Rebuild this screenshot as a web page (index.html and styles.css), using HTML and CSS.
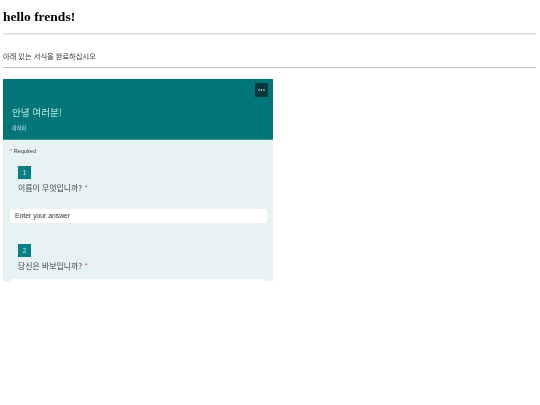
FILE: index.html
```html
<!DOCTYPE html>
<html lang="ko">
<head>
<meta charset="utf-8">
<title>hello frends!</title>
<link rel="stylesheet" href="styles.css">
</head>
<body>
<h1 class="title">hello frends!</h1>
<hr class="rule-top">
<p class="intro">아래 있는 서식을 완료하십시오</p>
<hr class="rule-bottom">
<section class="form">
  <header class="banner">
    <div class="banner-tools"><button class="more" type="button" aria-label="More">
      <svg width="7" height="2" viewBox="0 0 7 2"><circle cx="1" cy="1" r=".75"/><circle cx="3.5" cy="1" r=".75"/><circle cx="6" cy="1" r=".75"/></svg>
    </button></div>
    <h2 class="form-title">안녕 여러분!</h2>
    <p class="form-sub">하하하</p>
  </header>
  <div class="body">
    <p class="required"><span class="star">*</span> Required</p>
    <div class="question">
      <div class="q-head">
        <span class="num">1</span>
        <p class="q-text">이름이 무엇입니까? <span class="star">*</span></p>
      </div>
      <div class="answer">Enter your answer</div>
    </div>
    <div class="question second">
      <div class="q-head">
        <span class="num">2</span>
        <p class="q-text">당신은 바보입니까? <span class="star">*</span></p>
      </div>
      <div class="answer answer-cut"></div>
    </div>
  </div>
</section>
</body>
</html>
```
FILE: styles.css
```css
html, body { margin: 0; padding: 0; background: #fff; }
body { padding: 0 4px 0 3px; font-family: "Liberation Serif", "Noto Sans CJK KR", serif; color: #111; overflow: hidden; }
.title { margin: 0; padding-top: 8px; height: 26px; font-size: 13.5px; line-height: 17px; font-weight: 700; color: #000; box-sizing: border-box; filter: blur(.2px); }
hr { margin: 0; border: 0; display: block; }
.rule-top { height: 1px; margin-top: 7px; background: #dcdcdc; box-shadow: 0 1px 0 #efefef; }
.intro { margin: 0; padding-top: 17px; height: 33px; box-sizing: border-box; font-size: 7.25px; line-height: 10px; font-family: "Noto Sans CJK KR", sans-serif; color: #333; filter: blur(.25px); }
.rule-bottom { height: 1px; background: #c4c4c4; }
.form { width: 270px; height: 202px; margin-top: 11px; overflow: hidden; background: #e7f2f3; font-family: "Liberation Sans", "Noto Sans CJK KR", sans-serif; filter: blur(.25px); }
.banner { height: 61px; background: #03767a; box-sizing: border-box; padding: 4px 5px 0 9px; border-bottom: 1px solid #3f9a9c; }
.banner-tools { display: flex; justify-content: flex-end; height: 14px; }
.more { width: 13px; height: 14px; padding: 0; border: 0; border-radius: 1px; background: #04383b; display: flex; align-items: center; justify-content: center; }
.more svg { fill: #fff; display: block; }
.form-title { margin: 8px 0 0; font-size: 9.6px; line-height: 14px; font-weight: 400; color: #bfe4e2; font-family: "Noto Sans CJK KR", sans-serif; }
.form-sub { margin: 5px 0 0; font-size: 5.2px; line-height: 8px; color: #d8eeee; font-family: "Noto Sans CJK KR", sans-serif; }
.body { padding: 8px 6px 0 7px; }
.required { margin: 0; font-size: 5.5px; line-height: 7px; color: #333; }
.star { color: #d0605d; }
.question { margin-top: 11px; }
.q-head { padding-left: 8px; }
.num { display: flex; align-items: center; justify-content: center; width: 13px; height: 13px; background: #077f83; color: #d5eeee; font-size: 6.5px; }
.q-text { margin: 4px 0 0; font-size: 7.9px; line-height: 10px; color: #444; font-family: "Noto Sans CJK KR", sans-serif; }
.answer { margin-top: 16px; width: 257px; height: 14px; padding-left: 5px; box-sizing: border-box; background: #fff; font-size: 6.8px; line-height: 14px; color: #333; }
.answer-cut { margin-top: 8px; margin-left: 1px; width: 255px; }
.second { margin-top: 21px; }
```
